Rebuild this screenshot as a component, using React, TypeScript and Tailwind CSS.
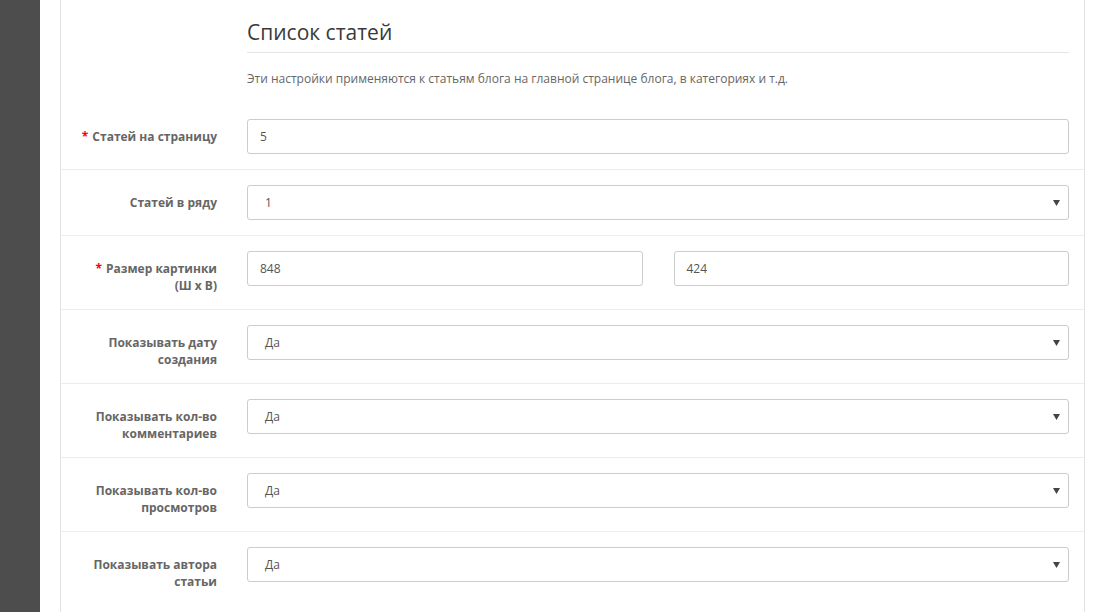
import React from 'react';

type Row = {
  label: React.ReactNode;
  required?: boolean;
  kind: 'input' | 'select' | 'pair';
  value?: string;
  values?: [string, string];
};

const rows: Row[] = [
  { label: 'Статей на страницу', required: true, kind: 'input', value: '5' },
  { label: 'Статей в ряду', kind: 'select', value: '1' },
  { label: <>Размер картинки<br />(Ш х В)</>, required: true, kind: 'pair', values: ['848', '424'] },
  { label: <>Показывать дату<br />создания</>, kind: 'select', value: 'Да' },
  { label: <>Показывать кол-во<br />комментариев</>, kind: 'select', value: 'Да' },
  { label: <>Показывать кол-во<br />просмотров</>, kind: 'select', value: 'Да' },
  { label: <>Показывать автора<br />статьи</>, kind: 'select', value: 'Да' },
];

const TextBox: React.FC<{ value: string }> = ({ value }) => (
  <div className="h-[35px] flex-1 flex items-center px-[12px] border border-[#cccccc] rounded-[3px] bg-white text-[12px] text-[#555555]">
    {value}
  </div>
);

const SelectBox: React.FC<{ value: string }> = ({ value }) => (
  <div className="h-[35px] flex-1 flex items-center justify-between pl-[17px] pr-[8px] border border-[#cccccc] rounded-[3px] bg-white text-[12px] text-[#555555]">
    <span>{value}</span>
    <svg width="7" height="6" viewBox="0 0 7 6" className="mt-[1px]">
      <polygon points="0,0 7,0 3.5,6" fill="#444444" />
    </svg>
  </div>
);

const App: React.FC = () => {
  return (
    <div className="flex min-h-screen bg-white" style={{ fontFamily: '"Open Sans", "Noto Sans", sans-serif' }}>
      <div className="w-[40px] shrink-0 bg-[#4d4d4d]" />
      <div className="flex-1 pl-[20px] pr-[12px]">
        <div className="min-h-full border-l border-r border-[#e3e3e3]">
          <div className="flex pt-[18px]">
            <div className="w-[171px] shrink-0" />
            <div className="flex-1 px-[15px]">
              <h2 className="text-[21px] leading-[28px] text-[#3a3a3a] pb-[6px] border-b border-[#e5e5e5]">Список статей</h2>
              <p className="mt-[17px] text-[12px] leading-[17px] text-[#666666]">
                Эти настройки применяются к статьям блога на главной странице блога, в категориях и т.д.
              </p>
            </div>
          </div>
          <div className="mt-[17px]">
            {rows.map((row, i) => (
              <div key={i} className={`flex py-[15px] ${i > 0 ? 'border-t border-[#ededed]' : ''}`}>
                <label className="w-[171px] shrink-0 pl-[15px] pr-[15px] pt-[9px] text-right text-[12px] leading-[17px] font-bold text-[#666666]">
                  {row.required && <span className="text-[#ff0000] mr-[4px]">*</span>}
                  {row.label}
                </label>
                <div className="flex-1 px-[15px] flex gap-[31px] items-start">
                  {row.kind === 'input' && <TextBox value={row.value!} />}
                  {row.kind === 'select' && <SelectBox value={row.value!} />}
                  {row.kind === 'pair' && (
                    <>
                      <TextBox value={row.values![0]} />
                      <TextBox value={row.values![1]} />
                    </>
                  )}
                </div>
              </div>
            ))}
          </div>
        </div>
      </div>
    </div>
  );
};

export default App;
